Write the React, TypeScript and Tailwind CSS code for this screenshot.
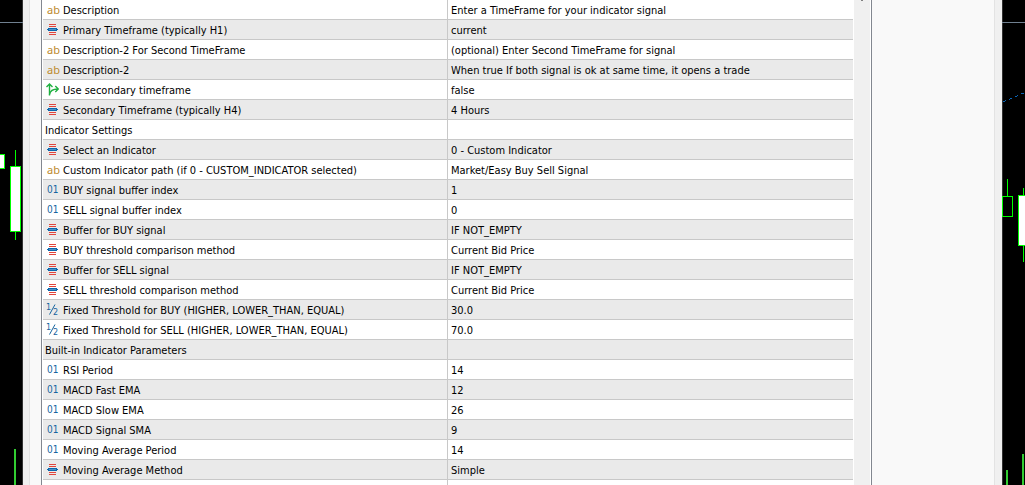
import type { ReactNode } from "react";

type Kind = "text" | "enum" | "bool" | "int" | "double";

type Row = {
    kind?: Kind;
    name: string;
    value?: string;
};

const rows: Row[] = [
    { kind: "text", name: "Description", value: "Enter a TimeFrame for your indicator signal" },
    { kind: "enum", name: "Primary Timeframe (typically H1)", value: "current" },
    { kind: "text", name: "Description-2 For Second TimeFrame", value: "(optional) Enter Second TimeFrame for signal" },
    { kind: "text", name: "Description-2", value: "When true If both signal is ok at same time, it opens a trade" },
    { kind: "bool", name: "Use secondary timeframe", value: "false" },
    { kind: "enum", name: "Secondary Timeframe (typically H4)", value: "4 Hours" },
    { name: "Indicator Settings" },
    { kind: "enum", name: "Select an Indicator", value: "0 - Custom Indicator" },
    { kind: "text", name: "Custom Indicator path (if 0 - CUSTOM_INDICATOR selected)", value: "Market/Easy Buy Sell Signal" },
    { kind: "int", name: "BUY signal buffer index", value: "1" },
    { kind: "int", name: "SELL signal buffer index", value: "0" },
    { kind: "enum", name: "Buffer for BUY signal", value: "IF NOT_EMPTY" },
    { kind: "enum", name: "BUY threshold comparison method", value: "Current Bid Price" },
    { kind: "enum", name: "Buffer for SELL signal", value: "IF NOT_EMPTY" },
    { kind: "enum", name: "SELL threshold comparison method", value: "Current Bid Price" },
    { kind: "double", name: "Fixed Threshold for BUY (HIGHER, LOWER_THAN, EQUAL)", value: "30.0" },
    { kind: "double", name: "Fixed Threshold for SELL (HIGHER, LOWER_THAN, EQUAL)", value: "70.0" },
    { name: "Built-in Indicator Parameters" },
    { kind: "int", name: "RSI Period", value: "14" },
    { kind: "int", name: "MACD Fast EMA", value: "12" },
    { kind: "int", name: "MACD Slow EMA", value: "26" },
    { kind: "int", name: "MACD Signal SMA", value: "9" },
    { kind: "int", name: "Moving Average Period", value: "14" },
    { kind: "enum", name: "Moving Average Method", value: "Simple" },
    { name: "" },
];

function EnumIcon() {
    return (
        <svg width="13" height="13" viewBox="0 0 13 13" shapeRendering="crispEdges">
            <path d="M3 1.5h7M3 3.5h7M3 9.5h7M3 11.5h7" stroke="#e2453c" />
            <path d="M2 5.5h9M1 6.5h11M2 7.5h9" stroke="#0f66ab" />
            <path d="M3 6.5h7" stroke="#4a93c8" />
        </svg>
    );
}

function BoolIcon() {
    return (
        <svg width="13" height="13" viewBox="0 0 13 13" fill="none" stroke="#1fb040" strokeWidth="1.4">
            <path d="M3.5 12.5V1M0.5 4L3.5 1L6.5 4" />
            <path d="M3.5 11.5C4 8 6 6 12 6M9.3 3L12.3 6L9.3 9" />
        </svg>
    );
}

function DoubleIcon() {
    return (
        <svg width="13" height="13" viewBox="0 0 13 13" fill="#15659f" className="font-['DejaVu_Sans',sans-serif] text-[8px]">
            <text x="0" y="7">1</text>
            <path d="M3.5 11.5L9 1.5" stroke="#15659f" />
            <text x="7" y="12">2</text>
        </svg>
    );
}

const icons: Record<Kind, ReactNode> = {
    text: <span className="pl-px text-[11px] leading-4 text-[#bd8a2c] font-['Noto_Sans',sans-serif]">ab</span>,
    int: <span className="pl-px text-[10px] leading-4 text-[#15659f]">01</span>,
    double: <DoubleIcon />,
    enum: <EnumIcon />,
    bool: <BoolIcon />,
};

function LeftChart() {
    return (
        <svg width="23" height="485" className="shrink-0 bg-black" shapeRendering="crispEdges">
            <path d="M22.5 0v485" stroke="#333" />
            <path d="M0 22.5h23" stroke="#708090" />
            <rect x="-3.5" y="154.5" width="8" height="14" fill="#fff" stroke="#00ff00" />
            <path d="M15.5 150v90" stroke="#00ff00" />
            <rect x="10.5" y="166.5" width="10" height="65" fill="#fff" stroke="#00ff00" />
            <path d="M15 449v36" stroke="#32cd32" strokeWidth="2" />
        </svg>
    );
}

function RightChart() {
    return (
        <svg width="23" height="485" className="shrink-0 bg-black" shapeRendering="crispEdges">
            <path d="M0.5 0v485" stroke="#333" />
            <path d="M0 22.5h23" stroke="#708090" />
            <path d="M1 101.5h2M3 100.5h1M7 99.5h1M8 98.5h2M13 96.5h2M15 95.5h1M19 93.5h3" stroke="#0a64b4" />
            <path d="M5.5 179v17" stroke="#00ff00" />
            <rect x="0.5" y="196.5" width="10" height="20" fill="#000" stroke="#00ff00" />
            <path d="M21.5 188v74" stroke="#00ff00" />
            <rect x="16.5" y="195.5" width="10" height="50" fill="#fff" stroke="#00ff00" />
            <path d="M5 470v15M21 454v31" stroke="#32cd32" strokeWidth="2" />
        </svg>
    );
}

function Inputs() {
    return (
        <table className="w-full table-fixed border-separate border-spacing-0">
            <tbody>
                {rows.map((row, index) => (
                    <tr key={index} className="even:bg-[#eaeaea]">
                        <td className="w-1/2 border-r border-b border-[#c8c8c8] p-0">
                            <div className="flex h-[19px] items-center overflow-hidden whitespace-nowrap">
                                {row.kind && (
                                    <span className="flex w-5 shrink-0 items-center pl-[3px]">{icons[row.kind]}</span>
                                )}
                                <span className={row.kind ? "pt-0.5" : "pt-0.5 pl-0.5"}>{row.name}</span>
                            </div>
                        </td>
                        <td className="w-1/2 border-b border-[#c8c8c8] p-0">
                            <div className="flex h-[19px] items-center overflow-hidden pl-[3px] whitespace-nowrap">
                                <span className="pt-0.5">{row.value}</span>
                            </div>
                        </td>
                    </tr>
                ))}
            </tbody>
        </table>
    );
}

function App() {
    return (
        <div className="flex h-screen overflow-hidden bg-black font-['DejaVu_Sans_Condensed','DejaVu_Sans',sans-serif] text-[11px] leading-4 text-black">
            <LeftChart />
            <main className="flex min-w-0 flex-1 border-r-[7px] border-l-[6px] border-[#f0f0f0] bg-[#f9f9f9]">
                <div className="w-3 shrink-0 border-l border-[#e3e3e3]" />
                <div className="flex min-w-0 flex-1 border-x border-[#828790] bg-white px-px">
                    <div className="mr-px min-w-0 flex-1">
                        <Inputs />
                    </div>
                    <div className="w-4 shrink-0 bg-[#f0f0f0]">
                        <div className="mx-auto h-px w-0.5 bg-[#808080]" />
                    </div>
                </div>
                <div className="w-[123px] shrink-0 border-r border-[#e3e3e3]" />
            </main>
            <RightChart />
        </div>
    );
}

export default App;
